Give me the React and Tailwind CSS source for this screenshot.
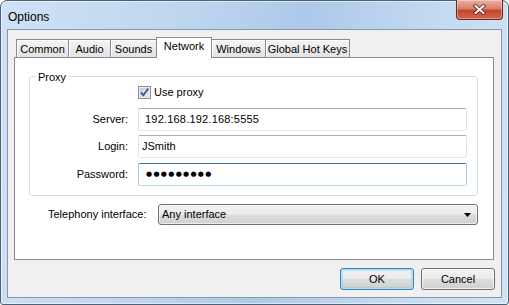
const tabs = [
  { label: "Common", cls: "w-[53px]" },
  { label: "Audio", cls: "w-[43px] -ml-px" },
  { label: "Sounds", cls: "w-[47px] -ml-px" },
  { label: "Network", cls: "w-[56px] -ml-px", active: true },
  { label: "Windows", cls: "w-[55px] -ml-px" },
  { label: "Global Hot Keys", cls: "w-[85px] -ml-px" },
];

const Tab = ({ label, cls, active }) => {
  if (active) {
    return (
      <div
        className={`${cls} relative z-10 h-[21px] flex items-center justify-center pb-[3px] bg-white border border-b-0 border-[#898c95]`}
      >
        {label}
      </div>
    );
  }
  return (
    <div
      className={`${cls} mb-px h-[18px] flex items-center justify-center pt-px bg-gradient-to-b from-[#f4f4f4] to-[#e3e3e3] border border-b-0 border-[#898c95] shadow-[inset_1px_1px_0_#ffffff]`}
    >
      {label}
    </div>
  );
};

const CheckBox = () => (
  <svg width="13" height="13" viewBox="0 0 13 13">
    <defs>
      <linearGradient id="cbg" x1="0" y1="0" x2="1" y2="1">
        <stop offset="0" stopColor="#cbcfd5" />
        <stop offset="1" stopColor="#f7f7f7" />
      </linearGradient>
    </defs>
    <rect x="0.5" y="0.5" width="12" height="12" fill="#ffffff" stroke="#8e8f8f" />
    <rect x="2" y="2" width="9" height="9" fill="url(#cbg)" stroke="#b6bcc6" strokeWidth="0.6" />
    <path d="M3 6.3 L5.4 9.3 L10.2 2.6" fill="none" stroke="#3c5d96" strokeWidth="1.9" strokeLinejoin="round" />
  </svg>
);

const Field = ({ label, children, focused, className }) => (
  <div className={`flex items-center ${className || ""}`}>
    <div className="w-[98px] text-right">{label}</div>
    <div
      className={`ml-[10px] w-[329px] h-[23px] flex items-center rounded-[2px] bg-white border ${
        focused
          ? "border-[#a4c9e3] border-t-[#3d7bad] border-b-[#b7d9ed]"
          : "border-[#e2e3ea] border-t-[#abadb3] border-b-[#e3e9ef]"
      }`}
    >
      {children}
    </div>
  </div>
);

const winButton =
  "h-[22px] w-[74px] flex items-center justify-center rounded-[3px] border bg-[linear-gradient(#f2f2f2_0%,#ebebeb_48%,#dddddd_52%,#cfcfcf_100%)]";

export default function App() {
  return (
    <div className="w-[509px] h-[305px] flex flex-col rounded-t-[7px] rounded-b-[3px] border border-[#4d6177] bg-[linear-gradient(100deg,#cfe2f6_0%,#bcd5ef_35%,#adc9e9_55%,#c4dbf2_80%,#d0e3f6_100%)] shadow-[inset_0_0_0_1px_rgba(255,255,255,0.55)] font-['Liberation_Sans',Arial,sans-serif] text-[11px] text-black">
      <div className="h-[28px] flex items-start justify-between">
        <div className="pl-[7px] pt-[7px] text-[12px]">Options</div>
        <div className="-mt-px mr-[5px] w-[47px] h-[20px] flex items-center justify-center rounded-b-[4px] border border-t-0 border-[#6b2a1f] bg-[linear-gradient(#eab1a4_0%,#d9806d_45%,#c4462f_55%,#d3664a_100%)] shadow-[inset_0_0_0_1px_rgba(255,255,255,0.35)]">
          <svg width="13" height="11" viewBox="0 0 13 11">
            <path d="M2.5 2 L10.5 9 M10.5 2 L2.5 9" stroke="#5a1d12" strokeWidth="3.6" strokeLinecap="square" />
            <path d="M2.5 2 L10.5 9 M10.5 2 L2.5 9" stroke="#ffffff" strokeWidth="2" strokeLinecap="square" />
          </svg>
        </div>
      </div>

      <div className="mx-[6px] h-[269px] flex flex-col bg-[#f0f0f0] border border-[#8a97a6]">
        <div className="pt-[7px] px-[6px]">
          <div className="relative z-10 -mb-px ml-[2px] flex items-end">
            {tabs.map((t) => (
              <Tab key={t.label} {...t} />
            ))}
          </div>
          <div className="w-[480px] h-[203px] bg-white border border-[#898c95]">
            <div className="relative ml-[14px] mt-[18px] w-[449px] h-[120px] rounded-[3px] border border-[#d5dfe5]">
              <div className="absolute left-[6px] top-[-8px] px-[2px] bg-white">Proxy</div>
              <div className="flex items-center ml-[108px] mt-[9px] h-[13px]">
                <CheckBox />
                <span className="ml-[3px]">Use proxy</span>
              </div>
              <Field label="Server:" className="mt-[9px]">
                <span className="pl-[6px] tracking-[0.2px]">192.168.192.168:5555</span>
              </Field>
              <Field label="Login:" className="mt-[4px]">
                <span className="pl-[3px]">JSmith</span>
              </Field>
              <Field label="Password:" className="mt-[5px]" focused>
                <span className="pl-[7px] font-['DejaVu_Sans',sans-serif] text-[7px] tracking-[1.3px]">●●●●●●●●●</span>
              </Field>
            </div>
            <div className="flex items-center ml-[33px] mt-[8px]">
              <div className="w-[110px]">Telephony interface:</div>
              <div className="w-[320px] h-[21px] flex items-center justify-between pl-[3px] pr-[6px] rounded-[3px] border border-[#707070] bg-[linear-gradient(#f2f2f2_0%,#ebebeb_48%,#dddddd_52%,#cfcfcf_100%)] shadow-[inset_0_0_0_1px_rgba(255,255,255,0.6)]">
                <span>Any interface</span>
                <svg width="7" height="4" viewBox="0 0 7 4">
                  <path d="M0 0 H7 L3.5 4 Z" fill="#000000" />
                </svg>
              </div>
            </div>
          </div>
        </div>
        <div className="mt-[8px] pr-[6px] flex justify-end gap-[7px]">
          <div className={`${winButton} border-[#3c7fb1] shadow-[inset_0_0_0_1px_#a9e2fa,inset_0_0_0_2px_rgba(110,200,240,0.35)]`}>
            OK
          </div>
          <div className={`${winButton} border-[#707070] shadow-[inset_0_0_0_1px_rgba(255,255,255,0.7)]`}>
            Cancel
          </div>
        </div>
      </div>
    </div>
  );
}
